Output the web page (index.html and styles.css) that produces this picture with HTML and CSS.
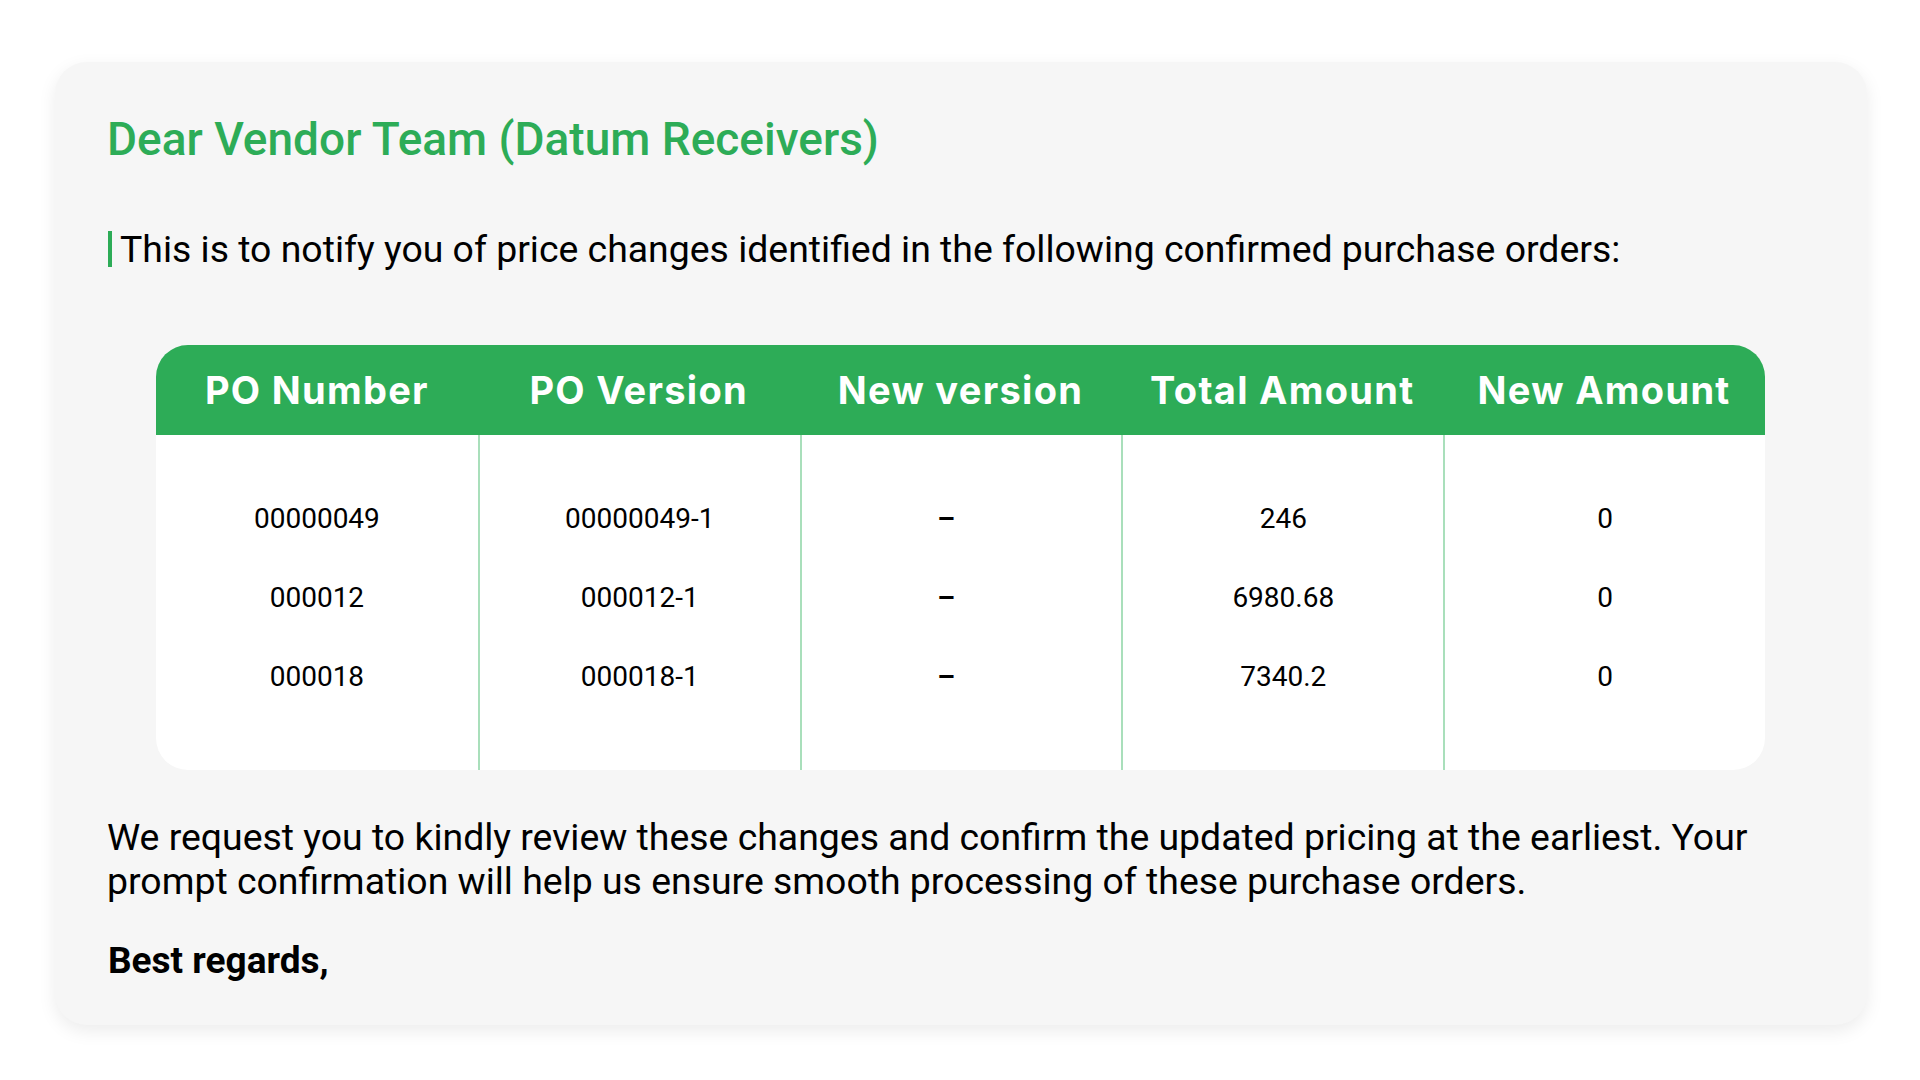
FILE: index.html
```html
<!DOCTYPE html>
<html lang="en">
<head>
<meta charset="utf-8">
<title>Price change notification</title>
<link rel="stylesheet" href="styles.css">
</head>
<body>
<div class="card">
  <h1 class="greeting">Dear Vendor Team (Datum Receivers)</h1>
  <p class="intro">This is to notify you of price changes identified in the following confirmed purchase orders:</p>
  <table class="po-table">
    <thead>
      <tr>
        <th>PO Number</th>
        <th>PO Version</th>
        <th>New version</th>
        <th>Total Amount</th>
        <th>New Amount</th>
      </tr>
    </thead>
    <tbody>
      <tr class="first">
        <td>00000049</td>
        <td>00000049-1</td>
        <td><span class="dash">–</span></td>
        <td>246</td>
        <td>0</td>
      </tr>
      <tr>
        <td>000012</td>
        <td>000012-1</td>
        <td><span class="dash">–</span></td>
        <td>6980.68</td>
        <td>0</td>
      </tr>
      <tr class="last">
        <td>000018</td>
        <td>000018-1</td>
        <td><span class="dash">–</span></td>
        <td>7340.2</td>
        <td>0</td>
      </tr>
    </tbody>
  </table>
  <p class="request">We request you to kindly review these changes and confirm the updated pricing at the earliest. Your prompt confirmation will help us ensure smooth processing of these purchase orders.</p>
  <p class="signoff">Best regards,</p>
</div>
</body>
</html>
```
FILE: styles.css
```css
html, body {
  margin: 0;
  padding: 0;
  background: #ffffff;
}
body {
  font-family: Roboto, "Liberation Sans", sans-serif;
  color: #000;
  padding: 62px 53px 40px 55px;
}
.card {
  background: #f6f6f6;
  border-radius: 32px;
  box-shadow: 0 6px 18px rgba(0, 0, 0, 0.08);
  padding: 49px 52px 42px 52px;
}
.greeting {
  margin: 0;
  font-size: 46px;
  line-height: 56px;
  font-weight: 500;
  color: #2dac57;
}
.intro {
  margin: 60px 0 0 0;
  display: flex;
  align-items: center;
  font-size: 37.4px;
  line-height: 44px;
  font-weight: 400;
}
.intro::before {
  content: "";
  display: block;
  width: 4px;
  height: 36px;
  background: #2dac57;
  margin: 0 8px 0 1px;
  flex: none;
}
.po-table {
  margin: 74px 50px 0 49px;
  width: calc(100% - 99px);
  border-collapse: separate;
  border-spacing: 0;
  table-layout: fixed;
}
.po-table th {
  background: #2dac57;
  color: #fff;
  font-family: Inter, "Open Sans", sans-serif;
  font-weight: 700;
  font-size: 38px;
  letter-spacing: 1.3px;
  height: 90px;
  padding: 0;
  text-align: center;
}
.po-table th:first-child { border-top-left-radius: 32px; }
.po-table th:last-child { border-top-right-radius: 32px; }
.po-table td {
  background: #fff;
  text-align: center;
  font-size: 28px;
  font-weight: 400;
  height: 79px;
  padding: 0;
  border-left: 2px solid #a9dfbb;
}
.po-table td:first-child { border-left: none; }
.po-table tr.first td { padding-top: 44px; }
.po-table tr.last td { padding-bottom: 54px; }
.po-table tr.last td:first-child { border-bottom-left-radius: 32px; }
.po-table tr.last td:last-child { border-bottom-right-radius: 32px; }
.dash {
  font-weight: 700;
  margin-right: 31px;
}
.request {
  margin: 45px 0 0 0;
  font-size: 37.4px;
  line-height: 44px;
}
.signoff {
  margin: 36px 0 0 1px;
  font-size: 37px;
  line-height: 44px;
  font-weight: 700;
}
```
